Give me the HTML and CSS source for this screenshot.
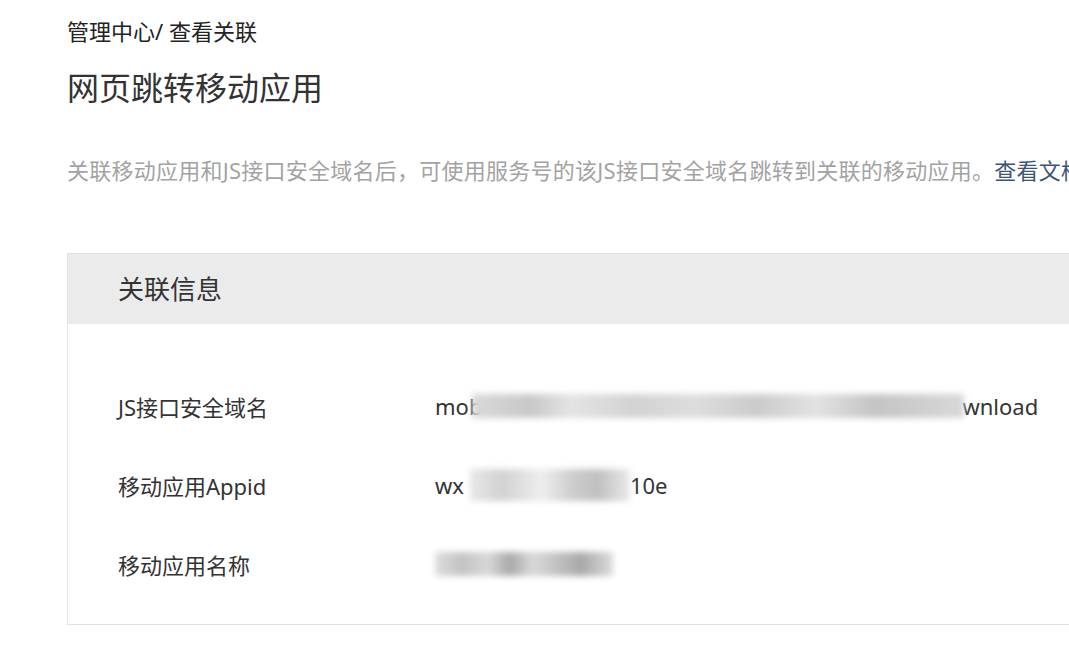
FILE: index.html
```html
<!DOCTYPE html>
<html lang="zh-CN">
<head>
    <meta charset="UTF-8">
    <title>网页跳转移动应用</title>
    <link rel="stylesheet" href="styles.css">
</head>
<body>
    <div id="page">
        <div class="breadcrumb">管理中心/ 查看关联</div>
        <h1 class="title">网页跳转移动应用</h1>
        <p class="desc">关联移动应用和JS接口安全域名后，可使用服务号的该JS接口安全域名跳转到关联的移动应用。<a class="doc-link" href="#">查看文档</a></p>

        <div class="card">
            <div class="card-head">关联信息</div>
            <div class="card-body">
                <div class="row">
                    <div class="label">JS接口安全域名</div>
                    <div class="value">mob<span class="mask mask-long"></span>wnload</div>
                </div>
                <div class="row">
                    <div class="label">移动应用Appid</div>
                    <div class="value">wx<span class="mask mask-mid"></span>10e</div>
                </div>
                <div class="row">
                    <div class="label">移动应用名称</div>
                    <div class="value"><span class="mask mask-short"></span></div>
                </div>
            </div>
        </div>
    </div>
</body>
</html>
```

FILE: styles.css
```css
body, html {
    margin: 0;
    padding: 0;
    background: #fff;
    overflow: hidden;
}

#page {
    padding: 16px 0 0 67px;
    font-family: "Noto Sans", "Noto Sans CJK SC", sans-serif;
    color: #333;
}

.breadcrumb {
    font-size: 22px;
    line-height: 30px;
    color: #222;
}

.title {
    margin: 22px 0 0;
    font-size: 32px;
    font-weight: normal;
    line-height: 40px;
    color: #333;
}

.desc {
    margin: 47px 0 0;
    font-size: 22px;
    letter-spacing: 0.25px;
    line-height: 30px;
    color: #a3a3a3;
    white-space: nowrap;
}

.doc-link {
    color: #3b5577;
    text-decoration: none;
}

.card {
    margin-top: 68px;
    width: 1100px;
    border: 1px solid #e3e3e3;
    border-right: none;
}

.card-head {
    background: #ebebeb;
    height: 70px;
    line-height: 70px;
    padding-left: 50px;
    font-size: 26px;
    color: #333;
}

.card-body {
    padding: 42px 0 21px 50px;
}

.row {
    display: flex;
    align-items: center;
    height: 79px;
    font-size: 22px;
    color: #333;
}

.label {
    width: 317px;
}

.value {
    display: flex;
    align-items: center;
}

.mask {
    display: inline-block;
    height: 24px;
    filter: blur(3px);
    background: linear-gradient(90deg, #d9d9d9 0%, #c8c8c8 12%, #e4e4e4 20%, #d2d2d2 33%, #dddddd 45%, #cbcbcb 58%, #e2e2e2 70%, #c4c4c4 82%, #d8d8d8 100%);
}

.mask-long {
    width: 492px;
    margin-left: -10px;
    margin-right: -2px;
}

.mask-mid {
    width: 160px;
    height: 32px;
    margin-left: 6px;
    background: linear-gradient(90deg, #e8e8e8 0%, #d2d2d2 20%, #eeeeee 45%, #cccccc 65%, #c0c0c0 80%, #eaeaea 100%);
}

.mask-short {
    width: 178px;
    background: linear-gradient(90deg, #dedede 0%, #c3c3c3 15%, #d8d8d8 30%, #a9a9a9 42%, #d9d9d9 55%, #bcbcbc 72%, #a8a8a8 82%, #dcdcdc 100%);
}
```
